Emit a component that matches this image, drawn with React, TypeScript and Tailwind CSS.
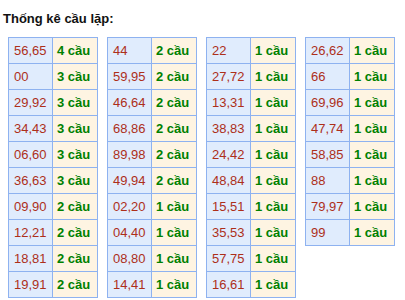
import React from 'react';

// Thống kê cầu lặp - four columns of pairs and their counts
const columns: [string, string][][] = [
  [
    ['56,65', '4 cầu'],
    ['00', '3 cầu'],
    ['29,92', '3 cầu'],
    ['34,43', '3 cầu'],
    ['06,60', '3 cầu'],
    ['36,63', '3 cầu'],
    ['09,90', '2 cầu'],
    ['12,21', '2 cầu'],
    ['18,81', '2 cầu'],
    ['19,91', '2 cầu'],
  ],
  [
    ['44', '2 cầu'],
    ['59,95', '2 cầu'],
    ['46,64', '2 cầu'],
    ['68,86', '2 cầu'],
    ['89,98', '2 cầu'],
    ['49,94', '2 cầu'],
    ['02,20', '1 cầu'],
    ['04,40', '1 cầu'],
    ['08,80', '1 cầu'],
    ['14,41', '1 cầu'],
  ],
  [
    ['22', '1 cầu'],
    ['27,72', '1 cầu'],
    ['13,31', '1 cầu'],
    ['38,83', '1 cầu'],
    ['24,42', '1 cầu'],
    ['48,84', '1 cầu'],
    ['15,51', '1 cầu'],
    ['35,53', '1 cầu'],
    ['57,75', '1 cầu'],
    ['16,61', '1 cầu'],
  ],
  [
    ['26,62', '1 cầu'],
    ['66', '1 cầu'],
    ['69,96', '1 cầu'],
    ['47,74', '1 cầu'],
    ['58,85', '1 cầu'],
    ['88', '1 cầu'],
    ['79,97', '1 cầu'],
    ['99', '1 cầu'],
  ],
];

function PairTable({ rows }: { rows: [string, string][] }) {
  return (
    <div className="grid grid-cols-[44px_45px] border-l border-t border-[#8eb2f0]">
      {rows.map(([pair, count]) => (
        <React.Fragment key={pair}>
          <div className="h-[26px] flex items-center pl-[5px] border-r border-b border-[#8eb2f0] bg-[#e0ecfd] text-[#ad2f1a]">
            {pair}
          </div>
          <div className="h-[26px] flex items-center pl-[4px] border-r border-b border-[#8eb2f0] bg-[#fef4e2] text-[#008000] font-bold">
            {count}
          </div>
        </React.Fragment>
      ))}
    </div>
  );
}

export default function App() {
  return (
    <div className="w-[405px] h-[300px] bg-white overflow-hidden text-[13px] leading-[15px] font-['Liberation_Sans',Arial,sans-serif]">
      <div className="pt-[11px] pl-[3px] font-bold text-[#111]">Thống kê cầu lặp:</div>
      <div className="flex items-start gap-[9px] pl-[8px] mt-[11px]">
        {columns.map((rows, i) => (
          <PairTable key={i} rows={rows} />
        ))}
      </div>
    </div>
  );
}
